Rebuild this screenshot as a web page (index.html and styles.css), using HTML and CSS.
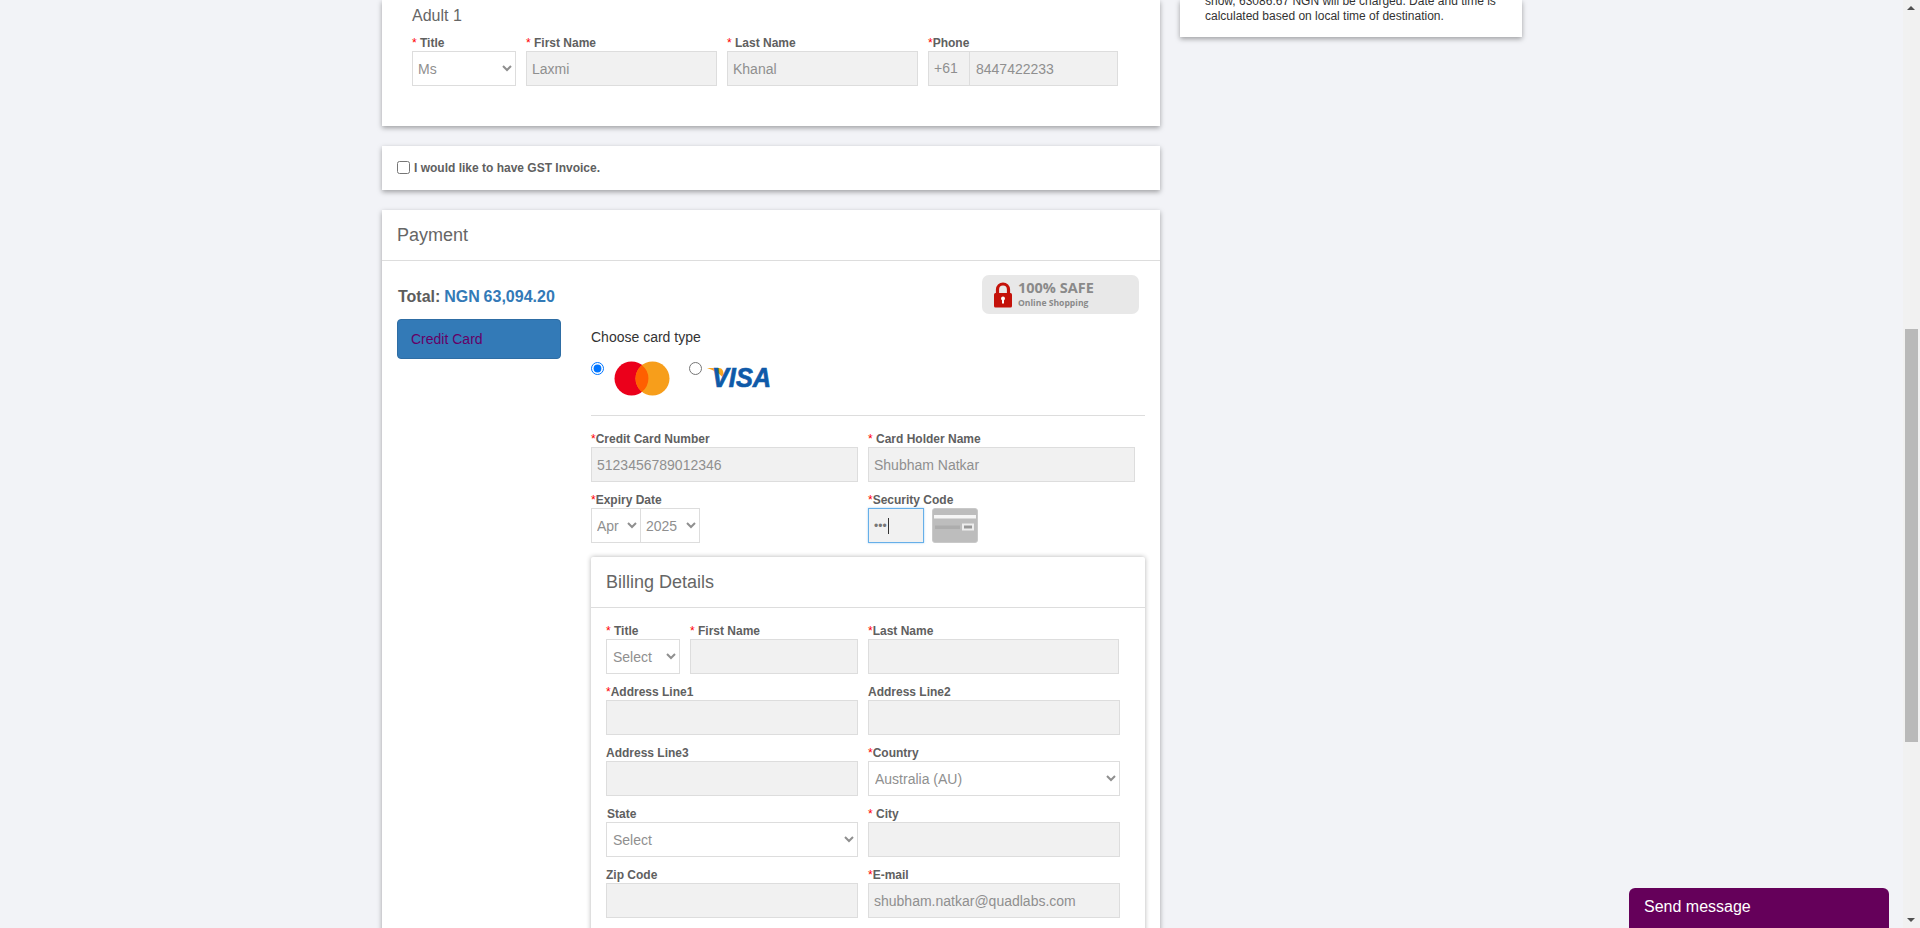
FILE: index.html
```html
<!DOCTYPE html>
<html lang="en">
<head>
<meta charset="utf-8">
<title>Payment</title>
<link rel="stylesheet" href="styles.css">
</head>
<body>
<div class="viewport">
  <div class="page">
    <div class="left">
      <section class="card adult">
        <h4 class="adult-title">Adult 1</h4>
        <div class="row">
          <div class="col w104"><label class="lbl"><i>*</i> Title</label>
            <select class="sel tight"><option>Ms</option></select></div>
          <div class="col w191"><label class="lbl"><i>*</i> First Name</label>
            <input class="fld" value="Laxmi"></div>
          <div class="col w191"><label class="lbl"><i>*</i> Last Name</label>
            <input class="fld" value="Khanal"></div>
          <div class="col w190"><label class="lbl"><i>*</i>Phone</label>
            <div class="phone"><span class="addon">+61</span><input class="fld phone-num" value="8447422233"></div></div>
        </div>
      </section>

      <section class="card gst">
        <input type="checkbox" class="check" id="gst"><label class="lbl gst-lbl" for="gst">I would like to have GST Invoice.</label>
      </section>

      <section class="card payment">
        <h3 class="card-head">Payment</h3>
        <div class="pay-body">
          <div class="pay-side">
            <div class="total">Total: <span class="amount">NGN 63,094.20</span></div>
            <a class="tab">Credit Card</a>
          </div>
          <div class="pay-main">
            <div class="safe">
              <svg class="lock" width="20" height="26" viewBox="0 0 20 26">
                <path d="M4.500 12V7.500a5.500 5.500 0 0 1 11 0V12" fill="none" stroke="#c4120a" stroke-width="3.200"/>
                <rect x="1" y="11" width="18" height="14.500" rx="1.500" fill="#c4120a"/>
                <circle cx="10" cy="16.500" r="2" fill="#fff"/>
                <rect x="9" y="17" width="2" height="4.500" fill="#fff"/>
              </svg>
              <div class="safe-text"><b class="safe-big">100% SAFE</b><span class="safe-small">Online Shopping</span></div>
            </div>
            <div class="choose">Choose card type</div>
            <div class="cards">
              <input type="radio" name="ct" class="radio" checked>
              <svg class="mc" width="56" height="35" viewBox="0 0 56 35">
                <circle cx="17.500" cy="17.500" r="17" fill="#eb001b"/>
                <circle cx="38.500" cy="17.500" r="17" fill="#f79e1b"/>
                <path d="M28 4.200a17 17 0 0 1 0 26.600a17 17 0 0 1 0-26.600z" fill="#ff5f00"/>
              </svg>
              <input type="radio" name="ct" class="radio radio2">
              <svg class="visa" width="70" height="24" viewBox="0 0 70 24">
                <path d="M0 1h12q3 0 4 3l2 9Q11 4 0 1z" fill="#f7a823"/>
                <text x="5" y="20" class="visa-text" textLength="59" lengthAdjust="spacingAndGlyphs">VISA</text>
              </svg>
            </div>
            <hr class="rule">
            <div class="row r1">
              <div class="col w267"><label class="lbl"><i>*</i>Credit Card Number</label>
                <input class="fld" value="5123456789012346"></div>
              <div class="col w267"><label class="lbl"><i>*</i> Card Holder Name</label>
                <input class="fld" value="Shubham Natkar"></div>
            </div>
            <div class="row r1 exp">
              <div class="col w267"><label class="lbl"><i>*</i>Expiry Date</label>
                <div class="expiry"><select class="sel tight s-mon"><option>Apr</option></select><select class="sel tight s-yr"><option>2025</option></select></div></div>
              <div class="col w267"><label class="lbl"><i>*</i>Security Code</label>
                <div class="sec">
                  <div class="cvv"><span class="dots">•••</span><span class="caret"></span></div>
                  <svg class="cvv-img" width="46" height="35" viewBox="0 0 46 35">
                    <rect x="0.500" y="0.500" width="45" height="34" rx="2.500" fill="#bdbdbd" stroke="#c9c9c9"/>
                    <rect x="2" y="7" width="42" height="3.500" fill="#f6f6f6"/>
                    <rect x="3" y="17.500" width="25" height="3.500" fill="#adadad"/>
                    <rect x="30" y="15.500" width="12" height="7" fill="#eee"/>
                    <rect x="32" y="17.500" width="8" height="3" fill="#999"/>
                  </svg>
                </div></div>
            </div>
            <section class="billing">
              <h3 class="card-head bill-head">Billing Details</h3>
              <div class="bill-body">
                <div class="row">
                  <div class="col w74"><label class="lbl"><i>*</i> Title</label>
                    <select class="sel"><option>Select</option></select></div>
                  <div class="col w168"><label class="lbl"><i>*</i> First Name</label><input class="fld"></div>
                  <div class="col w251"><label class="lbl"><i>*</i>Last Name</label><input class="fld"></div>
                </div>
                <div class="row b1">
                  <div class="col w252"><label class="lbl"><i>*</i>Address Line1</label><input class="fld"></div>
                  <div class="col w252"><label class="lbl">Address Line2</label><input class="fld"></div>
                </div>
                <div class="row b1">
                  <div class="col w252"><label class="lbl">Address Line3</label><input class="fld"></div>
                  <div class="col w252"><label class="lbl"><i>*</i>Country</label>
                    <select class="sel"><option>Australia (AU)</option></select></div>
                </div>
                <div class="row b1">
                  <div class="col w252"><label class="lbl state">State</label>
                    <select class="sel"><option>Select</option></select></div>
                  <div class="col w252"><label class="lbl"><i>*</i> City</label><input class="fld"></div>
                </div>
                <div class="row b1">
                  <div class="col w252"><label class="lbl">Zip Code</label><input class="fld"></div>
                  <div class="col w252"><label class="lbl"><i>*</i>E-mail</label><input class="fld" value="shubham.natkar@quadlabs.com"></div>
                </div>
              </div>
            </section>
          </div>
        </div>
      </section>
    </div>
    <aside class="right">
      <section class="card note">
        <p class="note-text">show, 63086.67 NGN will be charged. Date and time is calculated based on local time of destination.</p>
      </section>
    </aside>
  </div>
</div>
<div class="scrollbar">
  <span class="arrow up"></span>
  <div class="track"><div class="thumb"></div></div>
  <span class="arrow down"></span>
</div>
<div class="chat">Send message</div>
</body>
</html>
```
FILE: styles.css
```css
* { box-sizing: border-box; }
html, body { margin: 0; height: 928px; overflow: hidden; }
body {
  display: flex;
  background: #f2f3f7;
  font-family: "Liberation Sans", Arial, sans-serif;
  color: #555;
}
.viewport { flex: 1; height: 928px; overflow: hidden; }
.page {
  width: 1140px;
  margin: 0 auto;
  display: flex;
  gap: 20px;
  align-items: flex-start;
  padding-left: 0.5px;
}
.left { width: 778px; flex: none; }
.right { width: 342px; flex: none; }
.card {
  background: #fff;
  box-shadow: 0 2px 5px rgba(0, 0, 0, .35);
}
.note { height: 37px; padding: 0 25px; display: flow-root; overflow: hidden; }
.note-text { margin: -6px 0 0; font-size: 12px; line-height: 15px; color: #333; }
.adult { height: 126px; padding: 7px 30px 0; }
.adult-title { margin: 0 0 10px; font-size: 16px; font-weight: 400; line-height: 18px; color: #666; }
.row { display: flex; gap: 10px; }
.col { display: flex; flex-direction: column; flex: none; }
.w104 { width: 104px; }
.w190 { width: 190px; }
.w191 { width: 191px; }
.w267 { width: 267px; }
.w74 { width: 74px; }
.w168 { width: 168px; }
.w251 { width: 251px; }
.w252 { width: 252px; }
.lbl { font-size: 12px; font-weight: 700; line-height: 16px; height: 16px; color: #606060; white-space: nowrap; }
.lbl i { color: #f00; font-style: normal; font-weight: 400; }
.state { padding-left: 1px; }
.fld, .sel {
  height: 35px;
  width: 100%;
  border: 1px solid #ddd;
  font: 14px "Liberation Sans", Arial, sans-serif;
  color: #8f8f8f;
  border-radius: 0;
  outline: 0;
}
.fld { background: #f1f1f1; padding: 0 5px; }
.sel { background: #fff; padding: 0 2px; }
.sel.tight { padding: 0 1px; }
.phone { display: flex; height: 35px; }
.addon { width: 42px; flex: none; border: 1px solid #ddd; background: #f1f1f1; font-size: 14px; line-height: 33px; color: #8f8f8f; padding-left: 5px; }
.phone-num { border-left: 0; padding-left: 6px; }

.gst { height: 44px; margin-top: 20px; padding: 15px 15px 0; display: flex; align-items: flex-start; }
.check { width: 13px; height: 13px; margin: 0 4px 0 0; }
.gst-lbl { line-height: 14px; }

.payment { margin-top: 20px; height: 760px; }
.card-head { margin: 0; height: 51px; padding: 15px 15px 0; font-size: 18px; font-weight: 400; line-height: 20px; color: #666; border-bottom: 1px solid #ddd; }
.pay-body { display: flex; padding: 0 15px; }
.pay-side { width: 164px; flex: none; }
.total { margin: 27px 0 0 1px; font-size: 16px; font-weight: 700; line-height: 18px; color: #5c5c5c; word-spacing: -.6px; }
.amount { color: #337ab7; }
.tab { display: block; margin-top: 13px; height: 40px; background: #337ab7; border: 1px solid #2e6da4; border-radius: 4px; padding-left: 13px; font-size: 14px; line-height: 38px; color: #660066; }
.pay-main { margin-left: 30px; width: 554px; flex: none; position: relative; height: 700px; }
.safe { position: absolute; left: 391px; top: 14px; width: 157px; height: 39px; background: #e8e8e8; border-radius: 7px; display: flex; align-items: center; padding-left: 11px; gap: 5px; }
.safe-text { display: flex; flex-direction: column; padding-top: 1px; font-family: "Open Sans", sans-serif; color: #8a8a8a; }
.safe-big { font-size: 14.500px; line-height: 16px; }
.safe-small { font-size: 8.600px; font-weight: 700; line-height: 14px; }
.choose { padding-top: 68px; font-size: 14px; line-height: 16px; color: #333; }
.cards { display: flex; align-items: flex-start; margin-top: 16px; height: 35px; }
.radio { width: 13px; height: 13px; margin: 1px 0 0; flex: none; }
.mc { margin-left: 10px; flex: none; }
.radio2 { margin-left: 19px; }
.visa { margin: 6px 0 0 5px; flex: none; }
.visa-text { font: italic 700 27px "Liberation Sans", Arial, sans-serif; fill: #0f5aa8; stroke: #0f5aa8; stroke-width: .7px; }
.rule { margin: 19px 0 0; border: 0; border-top: 1px solid #ddd; height: 0; }
.r1 { margin-top: 15px; }
.exp { margin-top: 10px; }
.expiry { display: flex; width: 109px; }
.s-mon { width: 50px; flex: none; }
.s-yr { width: 60px; flex: none; margin-left: -1px; }
.sec { display: flex; gap: 8px; }
.cvv { width: 56px; height: 35px; border: 1px solid #66afe9; background: #f1f1f1; display: flex; align-items: center; padding-left: 5px; box-shadow: 0 0 2px rgba(102, 175, 233, .6); }
.dots { font-size: 12px; color: #777; }
.caret { width: 1px; height: 16px; background: #333; margin-left: 1px; }
.cvv-img { flex: none; }

.billing { margin-top: 14px; width: 554px; background: #fff; box-shadow: 0 0 5px rgba(0, 0, 0, .3); border-radius: 2px; height: 500px; }
.bill-body { padding: 15px 15px 0; }
.b1 { margin-top: 10px; }
.chat { position: absolute; right: 31px; bottom: 0; width: 260px; height: 40px; background: #65005a; color: #fff; font-size: 16px; line-height: 38px; padding-left: 15px; border-radius: 6px 6px 0 0; }

.scrollbar { width: 17px; flex: none; background: #f1f1f1; display: flex; flex-direction: column; height: 928px; }
.arrow { height: 17px; flex: none; position: relative; }
.arrow::after { content: ""; position: absolute; left: 4px; border-left: 4px solid transparent; border-right: 4px solid transparent; }
.up::after { top: 6px; border-bottom: 4px solid #505050; }
.down::after { top: 7px; border-top: 4px solid #505050; }
.track { flex: 1; padding-top: 312px; }
.thumb { height: 413px; background: #b9b9b9; margin: 0 2px; }
```
